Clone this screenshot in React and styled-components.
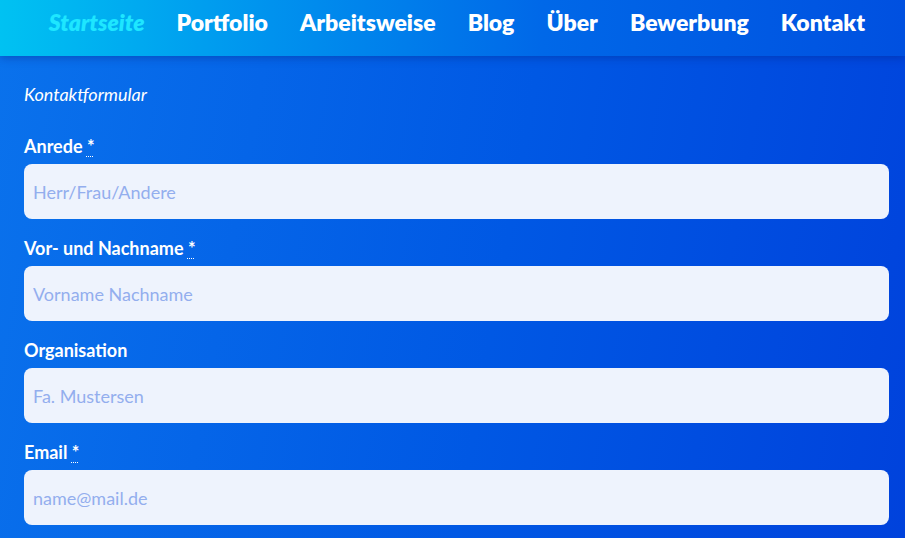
import React from 'react';
import styled, { createGlobalStyle } from 'styled-components';

const GlobalStyle = createGlobalStyle`
  html, body {
    margin: 0;
    padding: 0;
    height: 100%;
  }
  body {
    font-family: Lato, "Open Sans", sans-serif;
    background: linear-gradient(100deg, #0a72ec 0%, #0058e4 55%, #0042dc 100%);
    min-height: 538px;
    overflow: hidden;
  }
`;

const Page = styled.div`
  width: 905px;
  min-height: 538px;
`;

const Header = styled.header`
  height: 56px;
  box-sizing: border-box;
  display: flex;
  align-items: flex-start;
  justify-content: flex-end;
  padding: 8px 40px 0 0;
  background: linear-gradient(90deg, #00c2f2 0%, #0092ee 30%, #0068e8 60%, #0050e0 100%);
  box-shadow: 0 2px 8px rgba(0, 30, 120, 0.35);
`;

const Nav = styled.nav`
  display: flex;
  gap: 32px;
`;

const NavLink = styled.a`
  font-size: 23px;
  line-height: 28px;
  font-weight: 800;
  font-style: ${p => (p.active ? 'italic' : 'normal')};
  color: ${p => (p.active ? '#1ee6ff' : '#ffffff')};
  text-decoration: none;
`;

const Form = styled.form`
  padding: 27px 16px 0 24px;
`;

const Title = styled.div`
  font-size: 18px;
  font-style: italic;
  color: #ffffff;
  margin-bottom: 29px;
`;

const Field = styled.div`
  display: flex;
  flex-direction: column;
  margin-bottom: 17px;
`;

const Label = styled.label`
  font-size: 18px;
  font-weight: 700;
  color: #ffffff;
  margin-bottom: 6px;
  line-height: 24px;

  abbr {
    text-decoration: underline dotted 1px;
    text-underline-offset: 3px;
    cursor: help;
  }
`;

const Input = styled.input`
  height: 55px;
  box-sizing: border-box;
  border: none;
  border-radius: 8px;
  background: #eef3fd;
  padding: 0 9px;
  font-family: Lato, "Open Sans", sans-serif;
  font-size: 18px;
  color: #1a2a60;
  outline: none;

  &::placeholder {
    color: #93aeee;
  }
`;

const links = ['Startseite', 'Portfolio', 'Arbeitsweise', 'Blog', 'Über', 'Bewerbung', 'Kontakt'];

const fields = [
  { label: 'Anrede', required: true, placeholder: 'Herr/Frau/Andere' },
  { label: 'Vor- und Nachname', required: true, placeholder: 'Vorname Nachname' },
  { label: 'Organisation', required: false, placeholder: 'Fa. Mustersen' },
  { label: 'Email', required: true, placeholder: 'name@mail.de' },
];

const App = () => {
  return (
    <Page>
      <GlobalStyle />
      <Header>
        <Nav>
          {links.map((l, i) => (
            <NavLink key={l} href="#" active={i === 0 ? 1 : 0}>
              {l}
            </NavLink>
          ))}
        </Nav>
      </Header>
      <Form>
        <Title>Kontaktformular</Title>
        {fields.map(f => (
          <Field key={f.label}>
            <Label>
              {f.label}
              {f.required ? (
                <>
                  {' '}
                  <abbr title="Pflichtfeld">*</abbr>
                </>
              ) : null}
            </Label>
            <Input placeholder={f.placeholder} />
          </Field>
        ))}
      </Form>
    </Page>
  );
};

export default App;
